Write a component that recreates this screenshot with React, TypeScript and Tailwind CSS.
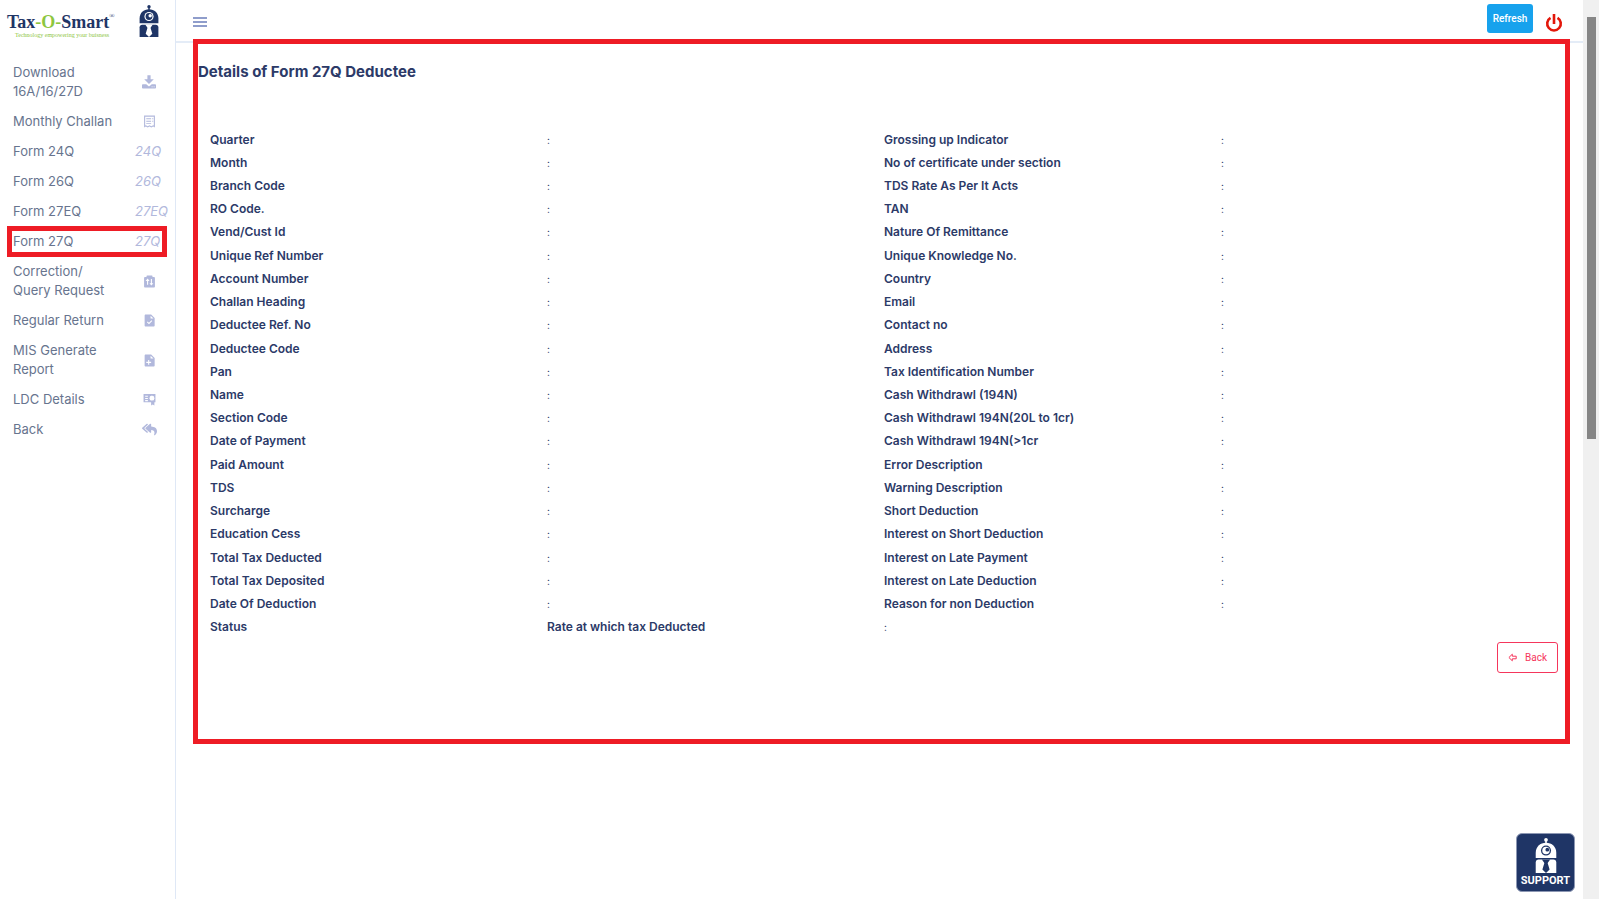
import type { ReactNode } from "react";
import { FaReplyAll } from "react-icons/fa";

function Robot({ className, body, cut }: { className: string; body: string; cut: string }) {
  return (
    <svg viewBox="0 0 20 32" className={className} aria-hidden="true">
      <circle cx="10" cy="1.7" r="1.7" fill={body} />
      <rect x="9.3" y="2" width="1.4" height="3" fill={body} />
      <path d="M0.6 18.3V13.4C0.6 8 4.6 4.3 10 4.3s9.4 3.7 9.4 9.1v4.900z" fill={body} />
      <circle cx="10" cy="11.500" r="4.600" fill={cut} />
      <circle cx="10" cy="11.500" r="3.400" fill={body} />
      <circle cx="11.200" cy="10.700" r="1.700" fill={cut} />
      <path d="M0.6 32V22.300c0-1.500 1.100-2.600 2.600-2.600h13.600c1.500 0 2.600 1.100 2.600 2.600V32z" fill={body} />
      <path d="M6.200 19.600h7.600l-2.300 3.200 1.800 6L10 32l-3.300-3.200 1.800-6z" fill={cut} />
      <path d="M9 20.600h2l.4 1.600-.6 1 1.300 5.200L10 31l-2.100-2.600 1.300-5.200-.6-1z" fill={cut} />
    </svg>
  );
}

function Icon({ children }: { children: ReactNode }) {
  return (
    <svg viewBox="0 0 24 24" className="size-[13px]" fill="currentColor" aria-hidden="true">
      {children}
    </svg>
  );
}

const downloadIcon = (
  <svg viewBox="0 0 14 14" className="size-3.5" fill="currentColor" aria-hidden="true">
    <path d="M5.400 0.300h3.200v4h3.200L7 9 2.200 4.300h3.200z" />
    <path d="M0.800 9.200h3.400L7 11.600l2.800-2.400h3.400c.4 0 .8.400.8.800v2.800c0 .4-.4.800-.8.800H.800c-.4 0-.8-.4-.8-.8V10c0-.4.4-.8.800-.8z" />
    <path d="M9.600 11.800h1M11.600 11.800h1" stroke="white" strokeWidth="0.8" />
  </svg>
);

const receiptIcon = (
  <Icon>
    <path
      fillRule="evenodd"
      d="M2 1h20v22l-3.300-2-3.300 2-3.400-2-3.400 2-3.300-2L2 23zM4 3v16.500l1.300-.8 3.300 2 3.400-2 3.400 2 3.300-2 1.300.8V3z"
    />
    <path d="M6 6h9v2H6zM17 6h2v2h-2zM6 10.500h9v2H6zM17 10.500h2v2h-2zM6 15h9v1.600H6z" />
  </Icon>
);

const correctionIcon = (
  <Icon>
    <path
      fillRule="evenodd"
      d="M4 3.500h2.500V2c0-.6.4-1 1-1h9c.6 0 1 .4 1 1v1.500H20c1.200 0 2 .8 2 2V21c0 1.200-.8 2-2 2H4c-1.200 0-2-.8-2-2V5.500c0-1.200.8-2 2-2zM8.500 6.500L4.800 11h2.700v7h2v-7h2.700zM14.500 7.500v7.500h-2.700l3.700 4.500 3.700-4.500h-2.700V7.500z"
    />
  </Icon>
);

const fileCheckIcon = (
  <Icon>
    <path
      fillRule="evenodd"
      d="M5 1h10l6.500 6.500V21c0 1.200-.9 2-2 2H5c-1.200 0-2-.8-2-2V3c0-1.100.8-2 2-2zM14 3v5.500h5.500zM15.700 11.500l-4.700 4.800-2.400-2.400-1.400 1.400 3.800 3.800 6.100-6.200z"
    />
  </Icon>
);

const filePlusIcon = (
  <Icon>
    <path
      fillRule="evenodd"
      d="M5 1h10l6.500 6.500V21c0 1.200-.9 2-2 2H5c-1.200 0-2-.8-2-2V3c0-1.100.8-2 2-2zM14 3v5.500h5.500zM9.500 11v3.500H6v2h3.500V20h2v-3.500H15v-2h-3.500V11z"
    />
  </Icon>
);

const certificateIcon = (
  <Icon>
    <path
      fillRule="evenodd"
      d="M1 2h22v15h-2v6l-3-2-3 2v-6H1zM4 5v2h5V5zM4 9v2h5V9zM4 13v2h5v-2zM16.500 4.500l-1.700 1.200-2 .1-.1 2-1.200 1.700 1.200 1.700.1 2 2 .1 1.700 1.200 1.700-1.200 2-.1.1-2 1.200-1.700-1.200-1.700-.1-2-2-.1z"
    />
  </Icon>
);

type NavItem = { lines: string[]; mark: ReactNode; active?: boolean };

const nav: NavItem[] = [
  { lines: ["Download", "16A/16/27D"], mark: downloadIcon },
  { lines: ["Monthly Challan"], mark: receiptIcon },
  { lines: ["Form 24Q"], mark: "24Q" },
  { lines: ["Form 26Q"], mark: "26Q" },
  { lines: ["Form 27EQ"], mark: "27EQ" },
  { lines: ["Form 27Q"], mark: "27Q", active: true },
  { lines: ["Correction/", "Query Request"], mark: correctionIcon },
  { lines: ["Regular Return"], mark: fileCheckIcon },
  { lines: ["MIS Generate", "Report"], mark: filePlusIcon },
  { lines: ["LDC Details"], mark: certificateIcon },
  { lines: ["Back"], mark: <FaReplyAll className="size-[15px]" aria-hidden="true" /> },
];

const rows: [string, string][] = [
  ["Quarter", "Grossing up Indicator"],
  ["Month", "No of certificate under section"],
  ["Branch Code", "TDS Rate As Per It Acts"],
  ["RO Code.", "TAN"],
  ["Vend/Cust Id", "Nature Of Remittance"],
  ["Unique Ref Number", "Unique Knowledge No."],
  ["Account Number", "Country"],
  ["Challan Heading", "Email"],
  ["Deductee Ref. No", "Contact no"],
  ["Deductee Code", "Address"],
  ["Pan", "Tax Identification Number"],
  ["Name", "Cash Withdrawl (194N)"],
  ["Section Code", "Cash Withdrawl 194N(20L to 1cr)"],
  ["Date of Payment", "Cash Withdrawl 194N(>1cr"],
  ["Paid Amount", "Error Description"],
  ["TDS", "Warning Description"],
  ["Surcharge", "Short Deduction"],
  ["Education Cess", "Interest on Short Deduction"],
  ["Total Tax Deducted", "Interest on Late Payment"],
  ["Total Tax Deposited", "Interest on Late Deduction"],
  ["Date Of Deduction", "Reason for non Deduction"],
];

function LabelCell({ children }: { children: ReactNode }) {
  return (
    <th scope="row" className="py-0 pl-3 text-[12px] leading-4 font-semibold">
      {children}
    </th>
  );
}

function ColonCell() {
  return <td className="py-0 pl-3 text-[10px] leading-4">:</td>;
}

function Sidebar() {
  return (
    <aside className="w-[176px] shrink-0 border-r border-[#dfe8f6]">
      <div className="flex h-[58px] items-start justify-between pt-[5px] pr-4 pl-[7px]">
        <a href="#home" className="block pt-1.5 font-['Liberation_Serif',serif]">
          <span className="flex text-[18px] leading-[22px] font-bold text-[#1f3566]">
            Tax<span className="text-[#8dc63f]">-O-</span>Smart
            <span className="text-[7px] leading-[10px] font-normal">®</span>
          </span>
          <span className="block pl-2 text-[6px] leading-[5px] whitespace-nowrap text-[#8dc63f]">
            Technology empowering your buisness
          </span>
        </a>
        <Robot className="h-8 w-5" body="#1f3566" cut="#ffffff" />
      </div>
      <nav>
        <ul>
          {nav.map((item) => (
            <li key={item.lines.join(" ")} className="relative">
              <a
                href="#menu"
                className="flex items-center pt-[5px] pb-1.5 pl-[13px] text-[13px] leading-[19px] text-[#67748e]"
              >
                <span className="w-[122px] shrink-0">
                  {item.lines.map((line) => (
                    <span key={line} className="block">
                      {line}
                    </span>
                  ))}
                </span>
                {typeof item.mark === "string" ? (
                  <i className="text-[#b1b8dc]">{item.mark}</i>
                ) : (
                  <span className="flex w-7 justify-center text-[#b1b8dc]">{item.mark}</span>
                )}
              </a>
              {item.active && (
                <span className="pointer-events-none absolute -top-px bottom-0 right-2 left-[7px] border-5 border-[#ee1c25]" />
              )}
            </li>
          ))}
        </ul>
      </nav>
    </aside>
  );
}

function TopBar() {
  return (
    <header className="flex h-[43px] items-start justify-between border-b-2 border-[#e4ecf7] pr-5 pl-[17px]">
      <button type="button" aria-label="Toggle menu" className="mt-[17px] text-[#8f9dcb]">
        <svg viewBox="0 0 14 10" className="h-2.5 w-3.5" fill="currentColor">
          <path d="M0 0h14v2H0zM0 4h14v2H0zM0 8h14v2H0z" />
        </svg>
      </button>
      <div className="flex items-start gap-3">
        <button
          type="button"
          className="mt-1 h-[29px] w-[46px] rounded-[3px] bg-[#17a2ed] font-[Roboto,sans-serif] text-[10px] font-medium text-white"
        >
          Refresh
        </button>
        <button type="button" aria-label="Log out" className="mt-3.5 text-[#e3170a]">
          <svg viewBox="0 0 18 19" className="h-[19px] w-[18px]" fill="none" stroke="currentColor">
            <path d="M5.500 3.800a6.800 6.800 0 1 0 7 0" strokeWidth="2.600" />
            <path d="M9 0v10" strokeWidth="2.600" />
          </svg>
        </button>
      </div>
    </header>
  );
}

function Details() {
  return (
    <main className="relative -mt-1 mr-[13px] ml-[17px] border-5 border-[#ee1c25] bg-white pb-[66px] text-[#2c3a68]">
      <h1 className="pt-4 text-[15px] leading-[24px] font-bold">Details of Form 27Q Deductee</h1>
      <div className="mt-11 pr-[19px]">
        <table className="h-[511px] w-full table-fixed text-left">
          <tbody>
            {rows.map(([left, right]) => (
              <tr key={left}>
                <LabelCell>{left}</LabelCell>
                <ColonCell />
                <LabelCell>{right}</LabelCell>
                <ColonCell />
              </tr>
            ))}
            <tr>
              <LabelCell>Status</LabelCell>
              <LabelCell>Rate at which tax Deducted</LabelCell>
              <ColonCell />
              <td />
            </tr>
          </tbody>
        </table>
      </div>
      <div className="mt-[3px] flex justify-end pr-[7px]">
        <button
          type="button"
          className="flex h-[31px] w-[61px] items-center justify-center gap-2 rounded-[3px] border border-[#f5365c] font-[Roboto,sans-serif] text-[10px] text-[#f5365c]"
        >
          <svg viewBox="0 0 9 9" className="size-[9px]" fill="none" stroke="currentColor" aria-hidden="true">
            <path d="M0.900 4.500L4.300 1.200v2h3.900v2.600H4.300v2z" strokeWidth="1" strokeLinejoin="round" />
          </svg>
          Back
        </button>
      </div>
    </main>
  );
}

export default function App() {
  return (
    <div className="flex min-h-screen bg-white font-[Inter,sans-serif]">
      <Sidebar />
      <div className="min-w-0 flex-1">
        <TopBar />
        <Details />
      </div>
      <div className="w-4 shrink-0 bg-[#f0f0f0] pt-[17px]">
        <div className="mx-auto h-[422px] w-[9px] bg-[#868686]" />
      </div>
      <button
        type="button"
        className="fixed right-6 bottom-[7px] flex h-[59px] w-[59px] flex-col items-center rounded-md border border-[#8c97b3] bg-[#1f3566] pt-1 text-white"
      >
        <Robot className="h-[35px] w-[22px]" body="#ffffff" cut="#1f3566" />
        <span className="font-[Roboto,sans-serif] text-[11px] leading-4 font-bold">SUPPORT</span>
      </button>
    </div>
  );
}
